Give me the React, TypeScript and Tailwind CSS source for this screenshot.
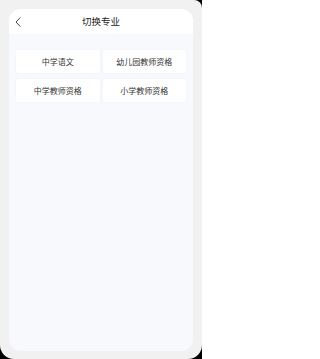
import React from "react";

const items = ["中学语文", "幼儿园教师资格", "中学教师资格", "小学教师资格"];

export default function App() {
  return (
    <div className="w-[202px] h-[359px] bg-black overflow-hidden" style={{ fontFamily: '"Noto Sans CJK SC", "Noto Sans", sans-serif' }}>
      <div className="w-full h-full bg-[#f1f1f1] rounded-b-[14px] rounded-tr-[8px] pt-[9px] px-[9px] pb-[8px] flex flex-col">
        <div className="flex-1 rounded-[12px] bg-[#f7f9fd] overflow-hidden flex flex-col">
          <div className="h-[25px] bg-white flex items-center relative shrink-0">
            <svg className="absolute left-[6px] top-[8px]" width="6" height="10" viewBox="0 0 6 10" fill="none">
              <path d="M5 0.8L1 5L5 9.2" stroke="#444" strokeWidth="1" strokeLinecap="round" strokeLinejoin="round" />
            </svg>
            <div className="w-full text-center text-[9.5px] leading-none text-[#222] font-normal">切换专业</div>
          </div>
          <div className="px-[7px] pt-[16px] grid grid-cols-2 gap-x-[3px] gap-y-[6px]">
            {items.map((t) => (
              <div key={t} className="h-[23px] bg-white rounded-[2px] flex items-center justify-center text-[8px] text-[#333] shadow-[0_0_2px_rgba(210,218,235,0.35)]">
                {t}
              </div>
            ))}
          </div>
        </div>
      </div>
    </div>
  );
}
